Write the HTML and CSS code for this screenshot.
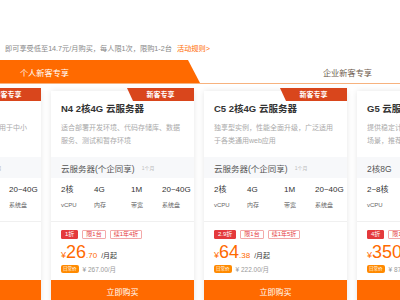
FILE: index.html
```html
<!DOCTYPE html>
<html lang="zh-CN">
<head>
    <meta charset="UTF-8">
    <title>新客专享 云服务器</title>
    <link rel="stylesheet" href="styles.css">
</head>
<body>
    <p class="notice">即可享受低至14.7元/月购买，每人限1次，限购1-2台<a href="#">活动规则&gt;</a></p>

    <div class="wrap">
        <div class="tabs">
            <div class="tab active">个人新客专享</div>
            <div class="tab">企业新客专享</div>
        </div>

        <div class="cards">
            <div class="card">
                <div class="ribbon">新客专享</div>
                <div class="card-head">
                    <h3 class="title">T6 2核2G 云服务器</h3>
                    <p class="desc">突发性能实例，性价比高，适用于中小型网站</p>
                </div>
                <div class="plan">云服务器(个企同享)<small>1个月</small></div>
                <div class="specs">
                    <div><b>2核</b><span>vCPU</span></div>
                    <div><b>2G</b><span>内存</span></div>
                    <div><b>1M</b><span>带宽</span></div>
                    <div><b>20~40G</b><span>系统盘</span></div>
                </div>
                <div class="buy">
                    <div class="tags"><span class="tag hot">1折</span><span class="tag">限1台</span><span class="tag">续1年4折</span></div>
                    <div class="price"><em>¥</em><strong>14</strong><small>.70</small><span>/月起</span></div>
                    <div class="orig"><i>日常价</i>¥ 147.00/月</div>
                </div>
                <div class="btn">立即购买</div>
            </div>

            <div class="card">
                <div class="ribbon">新客专享</div>
                <div class="card-head">
                    <h3 class="title">N4 2核4G 云服务器</h3>
                    <p class="desc">适合部署开发环境、代码存储库、数据服务、测试和暂存环境</p>
                </div>
                <div class="plan">云服务器(个企同享)<small>1个月</small></div>
                <div class="specs">
                    <div><b>2核</b><span>vCPU</span></div>
                    <div><b>4G</b><span>内存</span></div>
                    <div><b>1M</b><span>带宽</span></div>
                    <div><b>20~40G</b><span>系统盘</span></div>
                </div>
                <div class="buy">
                    <div class="tags"><span class="tag hot">1折</span><span class="tag">限1台</span><span class="tag">续1年4折</span></div>
                    <div class="price"><em>¥</em><strong>26</strong><small>.70</small><span>/月起</span></div>
                    <div class="orig"><i>日常价</i>¥ 267.00/月</div>
                </div>
                <div class="btn">立即购买</div>
            </div>

            <div class="card">
                <div class="ribbon">新客专享</div>
                <div class="card-head">
                    <h3 class="title">C5 2核4G 云服务器</h3>
                    <p class="desc">独享型实例，性能全面升级，广泛适用于各类通用web应用</p>
                </div>
                <div class="plan">云服务器(个企同享)<small>1个月</small></div>
                <div class="specs">
                    <div><b>2核</b><span>vCPU</span></div>
                    <div><b>4G</b><span>内存</span></div>
                    <div><b>1M</b><span>带宽</span></div>
                    <div><b>20~40G</b><span>系统盘</span></div>
                </div>
                <div class="buy">
                    <div class="tags"><span class="tag hot">2.9折</span><span class="tag">限1台</span><span class="tag">续1年5折</span></div>
                    <div class="price"><em>¥</em><strong>64</strong><small>.38</small><span>/月起</span></div>
                    <div class="orig"><i>日常价</i>¥ 222.00/月</div>
                </div>
                <div class="btn">立即购买</div>
            </div>

            <div class="card">
                <div class="ribbon">新客专享</div>
                <div class="card-head">
                    <h3 class="title">G5 云服务器 企业版</h3>
                    <p class="desc">提供稳定计算性能，适用于企业级应用场景，推荐中小企业使用</p>
                </div>
                <div class="plan">2核8G</div>
                <div class="specs">
                    <div><b>2~8核</b><span>vCPU</span></div>
                    <div><b>8G</b><span>内存</span></div>
                    <div><b>5M</b><span>带宽</span></div>
                    <div><b>40G</b><span>系统盘</span></div>
                </div>
                <div class="buy">
                    <div class="tags"><span class="tag hot">4折</span><span class="tag">限1台</span><span class="tag">续1年5折</span></div>
                    <div class="price"><em>¥</em><strong>350</strong><small>.40</small><span>/月起</span></div>
                    <div class="orig"><i>日常价</i>¥ 876.00/月</div>
                </div>
                <div class="btn">立即购买</div>
            </div>
        </div>
    </div>
</body>
</html>
```

FILE: styles.css
```css
* {
    margin: 0;
    padding: 0;
    box-sizing: border-box;
}

body {
    width: 400px;
    height: 300px;
    overflow: hidden;
    background-color: #fff;
    font-family: "Liberation Sans", "Noto Sans CJK SC", sans-serif;
}

.notice {
    height: 60px;
    padding: 44px 0 0 5px;
    font-size: 7.2px;
    line-height: 9px;
    color: #888;
    white-space: nowrap;
}

.notice a {
    margin-left: 5px;
    color: #ff6a00;
    text-decoration: none;
}

/* контент шире окна, сдвинут влево как карусель */
.wrap {
    width: 604px;
    margin-left: -103px;
}

.tabs {
    display: flex;
    height: 24px;
    border-bottom: 1px solid #f7b27e;
}

.tab {
    flex: 1;
    display: flex;
    align-items: center;
    justify-content: center;
    padding-right: 6px;
    font-size: 8.2px;
    color: #6e5b4c;
}

.tab.active {
    padding-right: 8px;
    background-color: #ff6a00;
    color: #fff;
    clip-path: polygon(0 0, calc(100% - 12px) 0, 100% 100%, 0 100%);
}

.cards {
    display: flex;
    gap: 10px;
    padding: 7px 1px 0;
}

.card {
    position: relative;
    flex: none;
    width: 143px;
    background-color: #fff;
    box-shadow: 0 0 6px rgba(0,0,0,0.1);
}

.ribbon {
    position: absolute;
    top: -3px;
    right: 0;
    width: 67px;
    height: 13px;
    background-color: #d9461c;
    color: #fff;
    font-size: 7px;
    font-weight: bold;
    line-height: 13px;
    text-align: center;
    clip-path: polygon(0 0, 100% 0, 100% 100%, 6px 100%);
}

.card-head {
    padding: 12px 10px 10px;
}

.title {
    font-size: 9.5px;
    font-weight: bold;
    line-height: 12px;
    color: #333;
    white-space: nowrap;
}

.desc {
    height: 26px;
    margin-top: 6px;
    font-size: 7px;
    line-height: 13px;
    color: #aaa;
    overflow: hidden;
}

.plan {
    display: flex;
    align-items: center;
    height: 21px;
    padding: 0 10px;
    background-color: #f7f8fa;
    font-size: 8.5px;
    color: #555;
}

.plan small {
    margin-left: 7px;
    font-size: 5px;
    color: #bbb;
}

.specs {
    display: grid;
    grid-template-columns: 33px 37px 31px 1fr;
    padding: 7px 10px 11px;
    border-bottom: 1px solid #f0f0f0;
    white-space: nowrap;
}

.specs b {
    display: block;
    font-size: 8px;
    font-weight: normal;
    line-height: 10px;
    color: #333;
}

.specs span {
    display: block;
    margin-top: 5px;
    font-size: 6px;
    line-height: 10px;
    color: #666;
}

.buy {
    padding: 8px 10px 7px;
}

.tags {
    display: flex;
    gap: 4px;
    height: 9px;
}

.tag {
    padding: 0 3px;
    border: 1px solid #f3a9a9;
    border-radius: 1px;
    font-size: 6px;
    line-height: 7px;
    color: #e4393c;
}

.tag.hot {
    background-color: #e4393c;
    border-color: #e4393c;
    color: #fff;
}

.price {
    display: flex;
    align-items: baseline;
    height: 18px;
    margin-top: 4px;
    color: #ff6a00;
    white-space: nowrap;
}

.price em {
    font-style: normal;
    font-size: 9px;
}

.price strong {
    font-size: 18px;
    font-weight: normal;
    line-height: 18px;
}

.price small {
    font-size: 8px;
}

.price span {
    margin-left: 4px;
    font-size: 7px;
    color: #333;
}

.orig {
    display: flex;
    align-items: center;
    height: 9px;
    margin-top: 3px;
    font-size: 6.5px;
    color: #999;
    white-space: nowrap;
}

.orig i {
    margin-right: 4px;
    padding: 0 2px;
    border-radius: 2px;
    background-color: #ff8a00;
    font-style: normal;
    font-size: 4.5px;
    line-height: 8px;
    color: #fff;
}

.btn {
    display: flex;
    align-items: center;
    justify-content: center;
    height: 23px;
    background-color: #ff6a00;
    font-size: 8px;
    color: #fff;
}
```
